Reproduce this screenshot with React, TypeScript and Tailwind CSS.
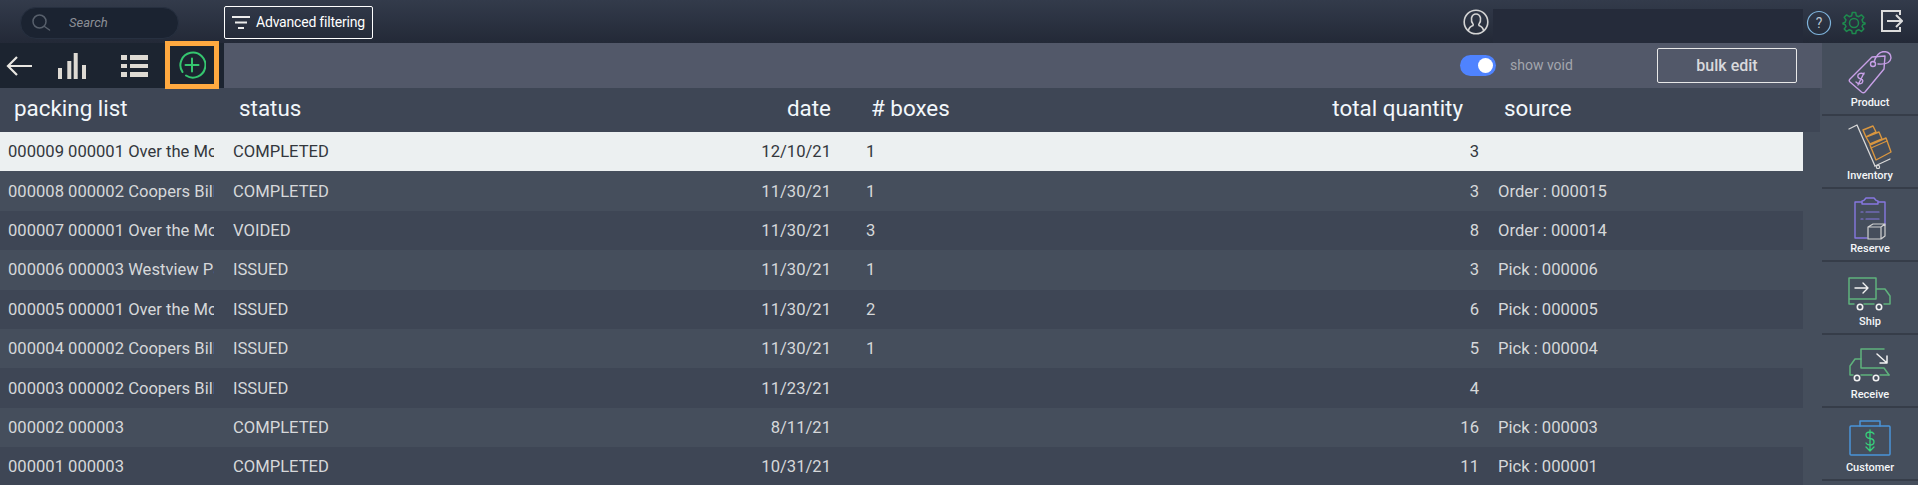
import React from "react";

const rows = [
  ["000009 000001 Over the Moon", "COMPLETED", "12/10/21", "1", "3", ""],
  ["000008 000002 Coopers Billing", "COMPLETED", "11/30/21", "1", "3", "Order : 000015"],
  ["000007 000001 Over the Moon", "VOIDED", "11/30/21", "3", "8", "Order : 000014"],
  ["000006 000003 Westview Park", "ISSUED", "11/30/21", "1", "3", "Pick : 000006"],
  ["000005 000001 Over the Moon", "ISSUED", "11/30/21", "2", "6", "Pick : 000005"],
  ["000004 000002 Coopers Billing", "ISSUED", "11/30/21", "1", "5", "Pick : 000004"],
  ["000003 000002 Coopers Billing", "ISSUED", "11/23/21", "", "4", ""],
  ["000002 000003", "COMPLETED", "8/11/21", "", "16", "Pick : 000003"],
  ["000001 000003", "COMPLETED", "10/31/21", "", "11", "Pick : 000001"],
];

const ProductIcon = () => (
  <svg width="44" height="44" viewBox="0 0 44 44" fill="none" stroke="#c79fe6" strokeWidth="1.4" strokeLinejoin="round" strokeLinecap="round">
    <path d="M24 6 L37 5 L36 18 L17 41 Q15.500 42.500 13.500 41 L2 31 Q0.500 29.500 2 28 Z" />
    <circle cx="25" cy="13" r="2.500" />
    <path d="M26 11 Q29 1 36 0.500 Q43 1 43 7 Q42 14 30 13" />
    <path d="M16 23 Q12 21 10 24 Q9 27 13 28 Q16 29 14 32 Q11 34 8 31 M10 34 L16 22" />
  </svg>
);
const InventoryIcon = () => (
  <svg width="44" height="46" viewBox="0 0 44 46" fill="none" strokeLinejoin="round" strokeLinecap="round">
    <path d="M1 6 L9 2 L27 43" stroke="#d8d8d8" strokeWidth="1.3" />
    <path d="M27 43 L42 36" stroke="#d8d8d8" strokeWidth="1.3" />
    <circle cx="30" cy="44" r="1.600" stroke="#d8d8d8" strokeWidth="1.200" />
    <path d="M15 7 L25 3 L28 9 L18 14 Z M18 14 L31 9 L34 16 L22 21 Z M22 22 L38 15 L43 29 L28 37 Z" stroke="#d9963f" strokeWidth="1.400" />
    <path d="M23 25 L39 18" stroke="#d9963f" strokeWidth="1.200" />
  </svg>
);
const ReserveIcon = () => (
  <svg width="32" height="43" viewBox="0 0 32 43" fill="none" strokeLinejoin="round" strokeLinecap="round">
    <path d="M8 5 H1 V41 H13 M24 5 H31 V28" stroke="#8677e0" strokeWidth="1.400" />
    <path d="M8 7 V4 Q10 4 12 1 H20 Q22 4 24 4 V7 Z" stroke="#8677e0" strokeWidth="1.400" />
    <path d="M7 15 H9 M12 15 H25 M7 22 H9 M12 22 H25" stroke="#8677e0" strokeWidth="1.200" />
    <path d="M14 30 L19 27 H31 V39 L27 42 H14 Z M14 30 H27 V42 M27 30 L31 27" stroke="#d0d0d0" strokeWidth="1.200" />
  </svg>
);
const ShipIcon = () => (
  <svg width="44" height="36" viewBox="0 0 44 36" fill="none" strokeLinejoin="round" strokeLinecap="round">
    <path d="M1 1 H28 V22 H1 Z M1 22 V27 H6 M16 27 H26 M36 27 H42 V19 L37 12 H28" stroke="#5fb27c" strokeWidth="1.500" />
    <circle cx="12" cy="30" r="2.700" stroke="#f2f2f2" strokeWidth="1.600" />
    <circle cx="31" cy="30" r="2.700" stroke="#f2f2f2" strokeWidth="1.600" />
    <path d="M7 11 H20 M15 6 L20 11 L15 16" stroke="#f2f2f2" strokeWidth="1.400" />
  </svg>
);
const ReceiveIcon = () => (
  <svg width="42" height="36" viewBox="0 0 42 36" fill="none" strokeLinejoin="round" strokeLinecap="round">
    <path d="M35 1 H12 V20 H35 L40 27" stroke="#5fb27c" strokeWidth="1.500" />
    <path d="M12 11 H6 L1 18 V27 H4 M12 27 H23 M31 27 H40" stroke="#5fb27c" strokeWidth="1.500" />
    <circle cx="8" cy="30" r="2.700" stroke="#f2f2f2" strokeWidth="1.600" />
    <circle cx="27" cy="30" r="2.700" stroke="#f2f2f2" strokeWidth="1.600" />
    <path d="M28 6 L38 15 M38 8 V15 H31" stroke="#f2f2f2" strokeWidth="1.500" />
  </svg>
);
const CustomerIcon = () => (
  <svg width="42" height="36" viewBox="0 0 42 36" fill="none" strokeLinejoin="round" strokeLinecap="round">
    <rect x="1" y="6" width="40" height="29" rx="1" stroke="#4a94d8" strokeWidth="1.500" />
    <path d="M11 6 V1 H31 V6" stroke="#4a94d8" strokeWidth="1.500" />
    <path d="M25 14 Q24 12 21 12 Q17 12 17 15 Q17 18 21 18.500 Q25 19 25 22 Q25 25 21 25 Q18 25 17 23 M21 10 V31 M17 27 L21 31 L25 27" stroke="#37d07a" strokeWidth="1.300" />
  </svg>
);

const side = [
  { label: "Product", icon: <ProductIcon />, c: "mb-0" },
  { label: "Inventory", icon: <InventoryIcon />, c: "-mb-[1px]" },
  { label: "Reserve", icon: <ReserveIcon />, c: "mb-[1px]" },
  { label: "Ship", icon: <ShipIcon />, c: "mb-[1px]" },
  { label: "Receive", icon: <ReceiveIcon />, c: "mb-[3px]" },
  { label: "Customer", icon: <CustomerIcon />, c: "mb-[4px]" },
];

export default function App() {
  return (
    <div className="w-[1918px] h-[485px] overflow-hidden flex flex-col bg-[#454e5c] font-['Roboto',sans-serif]">
      {/* top bar */}
      <div className="h-[43px] shrink-0 flex items-center pt-[2px] bg-gradient-to-b from-[#333b4b] to-[#232937]">
        <div className="ml-[20px] w-[159px] h-[32px] rounded-[16px] bg-[#1b2331] border border-[#273040] flex items-center">
          <svg className="ml-[10px]" width="20" height="20" viewBox="0 0 20 20" fill="none" stroke="#58606c" strokeWidth="1.500" strokeLinecap="round">
            <circle cx="8.500" cy="8.500" r="6.500" />
            <path d="M13.500 13.500 L18.500 17" />
          </svg>
          <span className="ml-[18px] text-[13px] italic text-[#8b8f96]">Search</span>
        </div>
        <div className="ml-[45px] w-[149px] h-[33px] rounded-[2px] border border-white flex items-center">
          <svg className="ml-[6px]" width="20" height="16" viewBox="0 0 20 16" stroke="#ececec" strokeWidth="2">
            <path d="M1 2 H19 M4 7.500 H16 M7 13 H13" />
          </svg>
          <span className="ml-[5px] text-[14px] text-white tracking-[-0.2px]">Advanced filtering</span>
        </div>
        <div className="ml-[1089px] w-[27px] -mt-[2px] flex justify-center">
          <svg width="26" height="26" viewBox="0 0 26 26" fill="none" stroke="#d4d4d4" strokeWidth="1.600" strokeLinecap="round">
            <circle cx="13" cy="13" r="11.800" />
            <path d="M5.500 21.500 Q6 18 10 16.500 Q10.500 15.500 10 15 Q8 12.500 8.500 9 Q9.500 5 13 5 Q16.500 5 17.500 9 Q18 12.500 16 15 Q15.500 15.500 16 16.500 Q20 18 20.500 21.500" />
          </svg>
        </div>
        <div className="ml-[4px] w-[310px] h-[34px] self-end bg-[#252b3a]" />
        <svg className="ml-[3px]" width="26" height="26" viewBox="0 0 26 26" fill="none" stroke="#7fb4dc" strokeWidth="1.200">
          <circle cx="13" cy="13" r="11.500" />
          <text x="13" y="18" textAnchor="middle" fontSize="14" fill="#b9c6d2" stroke="none" fontFamily="Roboto">?</text>
        </svg>
        <svg className="ml-[10px]" width="24" height="24" viewBox="0 0 24 24" fill="none" stroke="#1e8a4e" strokeWidth="1.500" strokeLinejoin="round">
          <circle cx="12" cy="12" r="4.500" />
          <path d="M10.300 1.500 H13.700 L14.300 4.700 L16.700 5.700 L19.400 3.900 L21.800 6.300 L20 9 L21 11.400 L23 12 V13 L21 13.500 L20 15.600 L21.800 18 L19.400 20.400 L16.700 18.700 L14.300 19.700 L13.700 22.500 H10.300 L9.700 19.700 L7.300 18.700 L4.600 20.400 L2.200 18 L4 15.600 L3 13.500 L1 13 V12 L3 11.400 L4 9 L2.200 6.300 L4.600 3.900 L7.300 5.700 L9.700 4.700 Z" />
        </svg>
        <svg className="ml-[15px] -mt-[3px]" width="22" height="22" viewBox="0 0 22 22" fill="none" stroke="#dcdcdc" strokeWidth="2">
          <path d="M19 5 V1 H1 V21 H19 V17" />
          <path d="M6 11 H21 M15 5 L21 11 L15 17" />
        </svg>
      </div>

      <div className="flex-1 flex min-h-0">
        <div className="w-[1822px] shrink-0 flex flex-col">
          {/* toolbar */}
          <div className="h-[45px] shrink-0 flex items-center bg-[#525869]">
            <div className="w-[224px] h-full flex items-center bg-[#1c2430]">
              <svg className="ml-[6px]" width="26" height="22" viewBox="0 0 26 22" fill="none" stroke="#e8e6e1" strokeWidth="2.200">
                <path d="M26 11 H2 M11 2 L2 11 L11 20" />
              </svg>
              <svg className="ml-[26px]" width="28" height="26" viewBox="0 0 28 26" fill="#dedad3">
                <rect x="0" y="15" width="4" height="11" />
                <rect x="9.300" y="8" width="4" height="18" />
                <rect x="15.700" y="0" width="4" height="26" />
                <rect x="24" y="12" width="4" height="14" />
              </svg>
              <svg className="ml-[35px]" width="27" height="22" viewBox="0 0 27 22" fill="#dedad3">
                <rect x="0" y="0" width="6" height="5" />
                <rect x="9" y="0" width="18" height="5" />
                <rect x="0" y="9" width="6" height="4" />
                <rect x="9" y="9" width="18" height="4" />
                <rect x="0" y="17" width="6" height="5" />
                <rect x="9" y="17" width="18" height="5" />
              </svg>
              <div className="ml-[17px] w-[54px] h-[48px] -mt-[1px] shrink-0 border-[5px] border-[#ffa940] flex items-center justify-center relative z-10 bg-[#1c2430]">
                <svg width="28" height="28" viewBox="0 0 28 28" fill="none" stroke="#35c56f" strokeWidth="2" strokeLinecap="round">
                  <path d="M8 24.500 A12.500 12.500 0 1 0 4.500 21" />
                  <path d="M14 7.500 V20.500 M7.500 14 H20.500" />
                </svg>
              </div>
            </div>
            <div className="ml-[1236px] w-[36px] h-[21px] rounded-full bg-[#4f83ff] flex items-center justify-end pr-[3px]">
              <div className="w-[15px] h-[15px] rounded-full bg-white" />
            </div>
            <span className="ml-[14px] text-[14px] w-[65px] whitespace-nowrap text-[#a3a6ad]">show void</span>
            <div className="ml-[82px] w-[140px] h-[35px] rounded-[2px] border border-[#e8e8e8] flex items-center justify-center text-[16px] font-medium text-[#d8d9dc]">bulk edit</div>
          </div>

          {/* header */}
          <div className="h-[44px] shrink-0 flex items-center pb-[3px] w-[1820px] bg-[#3e4655] text-[22.4px] text-[#f2f7fb]">
            <div className="w-[239px] pl-[14px]">packing list</div>
            <div className="w-[480px]">status</div>
            <div className="w-[112px] text-right">date</div>
            <div className="w-[40px]" />
            <div className="w-[201px]"># boxes</div>
            <div className="w-[391px] text-right">total quantity</div>
            <div className="ml-[41px]">source</div>
          </div>

          {/* rows */}
          <div className="flex-1 min-h-0 w-[1803px] flex flex-col">
            {rows.map((r, i) => (
              <div
                key={r[0]}
                className={
                  "h-[39.4px] shrink-0 flex items-center pt-[2px] text-[16.6px] " +
                  (i === 0
                    ? "bg-[#ecf0f1] text-[#33373d]"
                    : i % 2 === 1
                    ? "bg-[#454e5c] text-[#d6d8da]"
                    : "bg-[#3e4655] text-[#d6d8da]")
                }
              >
                <div className="w-[233px] pl-[8px]">
                  <div className="w-[206px] overflow-hidden whitespace-nowrap">{r[0]}</div>
                </div>
                <div className="w-[480px]">{r[1]}</div>
                <div className="w-[118px] text-right">{r[2]}</div>
                <div className="w-[35px]" />
                <div className="w-[200px]">{r[3]}</div>
                <div className="w-[413px] text-right">{r[4]}</div>
                <div className="ml-[19px]">{r[5]}</div>
              </div>
            ))}
          </div>
        </div>

        {/* sidebar */}
        <div className="w-[96px] shrink-0 flex flex-col bg-[#454e5c]">
          {side.map((s) => (
            <div key={s.label} className="h-[73px] shrink-0 flex flex-col items-center justify-end border-b-2 border-[#363d49] pb-[3px]">
              <div className={"flex justify-center " + s.c}>{s.icon}</div>
              <div className="text-[11px] font-medium leading-[16px] text-[#f4f6f8]">{s.label}</div>
            </div>
          ))}
        </div>
      </div>
    </div>
  );
}
